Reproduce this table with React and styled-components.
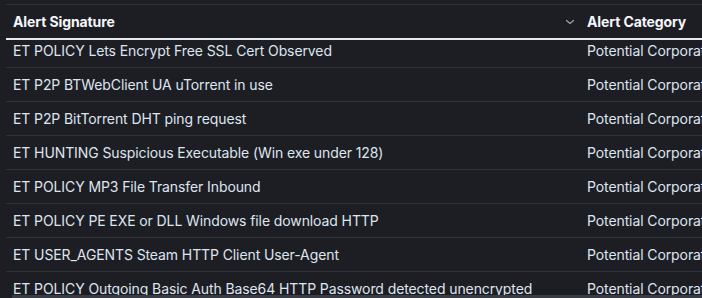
import React from 'react'
import styled, { createGlobalStyle } from 'styled-components'

const Global = createGlobalStyle`
  html, body {
    margin: 0;
    padding: 0;
    background: #1d1e24;
  }
  body {
    font-family: Inter, "Noto Sans", sans-serif;
    color: #dfe5ef;
    -webkit-font-smoothing: antialiased;
  }
`

const Frame = styled.div`
  position: relative;
  width: 702px;
  height: 298px;
  overflow: hidden;
  padding-top: 4px;
  box-sizing: border-box;
`

const Table = styled.div`
  margin-left: 6px;
  width: 760px;
  border-top: 1px solid #30323a;
`

const HeaderRow = styled.div`
  position: relative;
  z-index: 1;
  display: grid;
  grid-template-columns: 574px 1fr;
  height: 33px;
  background: #1d1e24;
  border-bottom: 2px solid #e6e9ef;
`

const HeaderCell = styled.div`
  display: flex;
  align-items: center;
  gap: 6px;
  padding: 0 ${p => (p.$sortable ? '4px' : '8px')} 0 7px;
  font-size: 14px;
  font-weight: 700;
  letter-spacing: -0.1px;
  color: #f5f7fa;
  white-space: nowrap;
`

const Title = styled.span`
  flex: 1;
`

const Body = styled.div`
  margin-top: -6px;
`

const Row = styled.div`
  display: grid;
  grid-template-columns: 574px 1fr;
  height: 33px;
  border-bottom: 1px solid #30323a;
`

const Cell = styled.div`
  display: flex;
  align-items: center;
  padding: 0 8px 0 7px;
  font-size: 14px;
  letter-spacing: -0.1px;
  color: #dfe5ef;
  white-space: nowrap;
  overflow: hidden;
`

const Scrollbar = styled.div`
  position: absolute;
  left: 12px;
  right: 0;
  bottom: 0;
  height: 3px;
  background: #3a3c45;
`

const Chevron = () => (
  <svg width="12" height="12" viewBox="0 0 12 12" fill="none">
    <path d="M2.5 4.5 L6 7.5 L9.5 4.5" stroke="#9aa0ab" strokeWidth="1.2" strokeLinecap="round" strokeLinejoin="round" />
  </svg>
)

const rows = [
  'ET POLICY Lets Encrypt Free SSL Cert Observed',
  'ET P2P BTWebClient UA uTorrent in use',
  'ET P2P BitTorrent DHT ping request',
  'ET HUNTING Suspicious Executable (Win exe under 128)',
  'ET POLICY MP3 File Transfer Inbound',
  'ET POLICY PE EXE or DLL Windows file download HTTP',
  'ET USER_AGENTS Steam HTTP Client User-Agent',
  'ET POLICY Outgoing Basic Auth Base64 HTTP Password detected unencrypted',
]

export default function App() {
  return (
    <Frame>
      <Global />
      <Table>
        <HeaderRow>
          <HeaderCell $sortable>
            <Title>Alert Signature</Title>
            <Chevron />
          </HeaderCell>
          <HeaderCell>Alert Category</HeaderCell>
        </HeaderRow>
        <Body>
          {rows.map(sig => (
            <Row key={sig}>
              <Cell>{sig}</Cell>
              <Cell>Potential Corporate Privacy Violation</Cell>
            </Row>
          ))}
        </Body>
      </Table>
      <Scrollbar />
    </Frame>
  )
}
